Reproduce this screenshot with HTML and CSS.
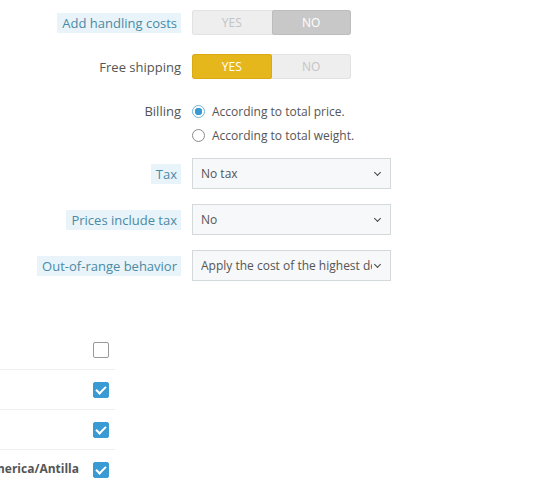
FILE: index.html
```html
<!DOCTYPE html>
<html lang="en">
<head>
  <meta charset="UTF-8">
  <title>Carrier Settings</title>
  <link rel="stylesheet" href="styles.css">
</head>
<body>

  <div class="form">
    <div class="row">
      <div class="label"><span class="hint">Add handling costs</span></div>
      <div class="switch">
        <span class="switch-opt">YES</span>
        <span class="switch-opt off-active">NO</span>
      </div>
    </div>

    <div class="row">
      <div class="label">Free shipping</div>
      <div class="switch">
        <span class="switch-opt on-active">YES</span>
        <span class="switch-opt">NO</span>
      </div>
    </div>

    <div class="row row-billing">
      <div class="label">Billing</div>
      <div class="radios">
        <label class="radio"><span class="dot checked"></span>According to total price.</label>
        <label class="radio"><span class="dot"></span>According to total weight.</label>
      </div>
    </div>

    <div class="row">
      <div class="label"><span class="hint">Tax</span></div>
      <div class="select"><span class="select-text">No tax</span><span class="caret"></span></div>
    </div>

    <div class="row">
      <div class="label"><span class="hint">Prices include tax</span></div>
      <div class="select"><span class="select-text">No</span><span class="caret"></span></div>
    </div>

    <div class="row">
      <div class="label"><span class="hint">Out-of-range behavior</span></div>
      <div class="select"><span class="select-text">Apply the cost of the highest defined range</span><span class="caret"></span></div>
    </div>
  </div>

  <!-- Zones table -->
  <div class="zones">
    <div class="zone"><span class="zone-name"></span><span class="check"></span></div>
    <div class="zone"><span class="zone-name"></span><span class="check checked"></span></div>
    <div class="zone"><span class="zone-name"></span><span class="check checked"></span></div>
    <div class="zone"><span class="zone-name">Central America/Antilla</span><span class="check checked"></span></div>
  </div>

</body>
</html>
```

FILE: styles.css
```css
body {
  margin: 0;
  font-family: "Open Sans", sans-serif;
  font-size: 13px;
  color: #555;
  background: #fff;
}

.form {
  padding-top: 10px;
}

.row {
  display: flex;
  align-items: center;
  margin-bottom: 19px;
}

.label {
  width: 181px;
  text-align: right;
  padding-right: 11px;
  box-sizing: content-box;
}

.hint {
  display: inline-block;
  background: #e8f4f9;
  color: #4b8aa6;
  padding: 2px 4px 1px 5px;
  line-height: 17px;
}

/* Yes / No switch */
.switch {
  display: flex;
  width: 159px;
  height: 25px;
  background: #eee;
  border-radius: 3px;
  box-shadow: inset 0 0 0 1px #e2e2e2;
  overflow: hidden;
}

.switch-opt {
  flex: 1;
  display: flex;
  align-items: center;
  justify-content: center;
  color: #c4c4c4;
  font-size: 12px;
}

.off-active {
  background: #c8c8c8;
  color: #fff;
  border-radius: 3px;
  box-shadow: inset 0 0 0 1px #bdbdbd;
}

.on-active {
  background: #e6b61d;
  color: #fff;
  border-radius: 3px;
  box-shadow: inset 0 0 0 1px #d9aa14;
}

/* Billing radios */
.row-billing {
  align-items: flex-start;
  padding-top: 3px;
  margin-bottom: 15px;
}

.row-billing .label {
  line-height: 20px;
}

.radios {
  display: flex;
  flex-direction: column;
  gap: 4px;
}

.radio {
  display: flex;
  align-items: center;
  height: 20px;
  gap: 7px;
  color: #555;
  font-size: 12px;
}

.dot {
  width: 11px;
  height: 11px;
  border: 1px solid #8a8a8a;
  border-radius: 50%;
  background: #fff;
  box-sizing: content-box;
}

.dot.checked {
  border-color: #6fb6dc;
  background: radial-gradient(circle, #3a9bd4 0 3.5px, #fff 4px);
}

/* Selects */
.select {
  display: flex;
  align-items: center;
  width: 199px;
  height: 31px;
  box-sizing: border-box;
  border: 1px solid #d4d9dc;
  background: #f6f8f9;
  padding: 0 8px;
  margin: -2px 0;
}

.select-text {
  flex: 1;
  white-space: nowrap;
  overflow: hidden;
  color: #555;
  font-size: 12px;
}

.caret {
  width: 4px;
  height: 4px;
  border-right: 1.5px solid #444;
  border-bottom: 1.5px solid #444;
  transform: rotate(45deg);
  margin: -3px 2px 0 3px;
  flex: none;
}

/* Zones */
.zones {
  width: 115px;
  margin-top: 51px;
}

.zone {
  display: flex;
  align-items: center;
  justify-content: flex-end;
  height: 39px;
  border-bottom: 1px solid #eceef0;
  white-space: nowrap;
}

.zone:last-child {
  border-bottom: none;
}

.zone-name {
  font-weight: bold;
  color: #555;
  font-size: 12px;
  margin: -3px 14px 0 0;
}

.check {
  width: 14px;
  height: 14px;
  border: 1px solid #999;
  border-radius: 2px;
  margin-right: 6px;
  flex: none;
}

.check.checked {
  border-color: #3a9bd4;
  background: #3a9bd4;
  position: relative;
}

.check.checked::after {
  content: "";
  position: absolute;
  left: 4px;
  top: 1px;
  width: 4px;
  height: 8px;
  border-right: 2px solid #fff;
  border-bottom: 2px solid #fff;
  transform: rotate(45deg);
}
```
